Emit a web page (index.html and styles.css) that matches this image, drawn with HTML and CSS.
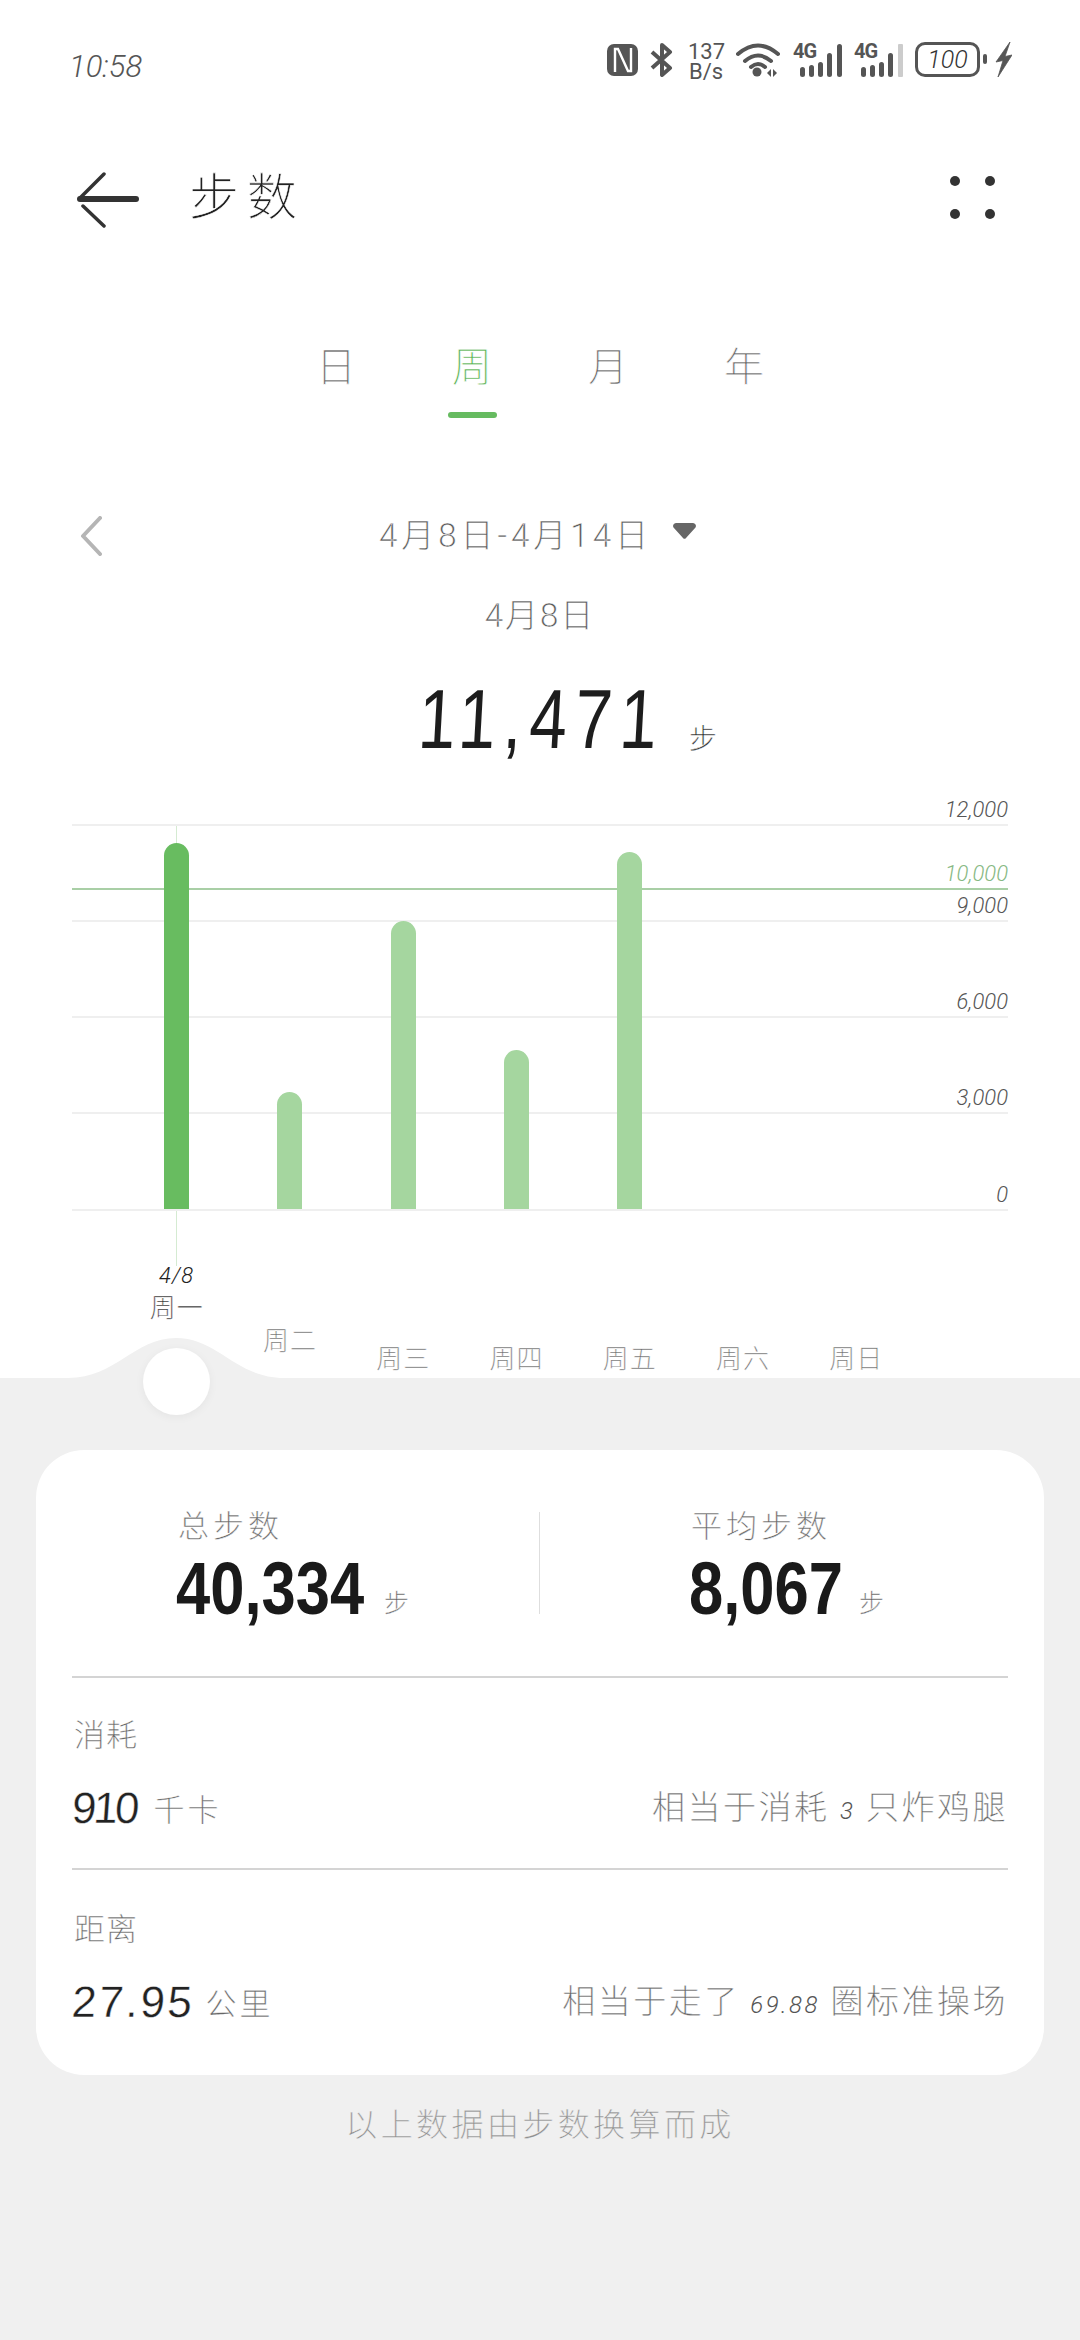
FILE: index.html
```html
<!DOCTYPE html>
<html lang="zh-CN">
<head>
<meta charset="utf-8">
<title>步数</title>
<link rel="stylesheet" href="styles.css">
</head>
<body>
<div class="screen">
  <header class="status">
    <span class="time">10:58</span>
    <div class="status-icons">
      <svg class="ic-nfc" width="31" height="32" viewBox="0 0 31 32"><rect width="31" height="32" rx="7" fill="#555"/><path d="M8 28V5h3l10 22h3V4" fill="none" stroke="#fff" stroke-width="2.400"/></svg>
      <svg class="ic-bt" width="23" height="34" viewBox="0 0 23 34"><path d="M2 9l18 16-8 7V2l8 7L2 25" fill="none" stroke="#555" stroke-width="4" stroke-linejoin="round"/></svg>
      <div class="speed">137<br>B/s</div>
      <svg class="ic-wifi" width="44" height="34" viewBox="0 0 44 34"><g fill="none" stroke="#555" stroke-width="4" stroke-linecap="round"><path d="M2 11Q22-6 42 11"/><path d="M9 18Q22 7 35 18"/><path d="M15 24Q22 18 29 24"/></g><circle cx="21" cy="29" r="4.500" fill="#555"/><path d="M31 30l4-4v8zM37 26l4 4-4 4z" fill="#555"/></svg>
      <div class="signal">
        <span class="net">4G</span>
        <svg width="42" height="33" viewBox="0 0 42 33"><g fill="#555"><rect x="0" y="23" width="5" height="10" rx="2.500"/><rect x="9" y="21" width="5" height="12" rx="2.500"/><rect x="18" y="18" width="5" height="15" rx="2.500"/><rect x="27" y="9" width="5" height="24" rx="2.500"/><rect x="37" y="0" width="5" height="33" rx="2.500"/></g></svg>
      </div>
      <div class="signal">
        <span class="net">4G</span>
        <svg width="42" height="33" viewBox="0 0 42 33"><g fill="#555"><rect x="0" y="23" width="5" height="10" rx="2.500"/><rect x="9" y="21" width="5" height="12" rx="2.500"/><rect x="18" y="18" width="5" height="15" rx="2.500"/><rect x="27" y="9" width="5" height="24" rx="2.500"/></g><rect x="37" y="0" width="5" height="33" rx="1" fill="#ccc"/></svg>
      </div>
      <div class="battery"><span>100</span></div>
      <span class="nub"></span>
      <svg class="ic-bolt" width="17" height="35" viewBox="0 0 17 35"><path d="M15 0L1 20l7-1.500L3 35l14-22-7 1.500z" fill="#555" stroke="#555" stroke-width=".8" stroke-linejoin="round"/></svg>
    </div>
  </header>

  <nav class="appbar">
    <svg class="back" width="64" height="56" viewBox="0 0 64 56"><path d="M28 2L4 26M7 34l21 20" fill="none" stroke="#333" stroke-width="3.500" stroke-linecap="round"/><path d="M4 27H60" stroke="#333" stroke-width="6" stroke-linecap="round"/></svg>
    <h1 class="title">步数</h1>
    <div class="more"><i></i><i></i><i></i><i></i></div>
  </nav>

  <div class="tabs">
    <div class="tab">日</div>
    <div class="tab active">周</div>
    <div class="tab">月</div>
    <div class="tab">年</div>
  </div>

  <div class="range">
    <svg class="prev" width="22" height="40" viewBox="0 0 22 40"><path d="M20 2L3 20l17 18" fill="none" stroke="#b5b5b5" stroke-width="4" stroke-linecap="round" stroke-linejoin="round"/></svg>
    <div class="range-label hand">4月8日-4月14日</div>
    <svg class="caret" width="23" height="16" viewBox="0 0 23 16"><path d="M3 0h17a3 3 0 0 1 2.500 4.500L13 15a2 2 0 0 1-3 0L.5 4.500A3 3 0 0 1 3 0z" fill="#666"/></svg>
  </div>

  <div class="picked hand">4月8日</div>

  <div class="total">
    <span class="total-num">11,471</span><span class="total-unit hand">步</span>
  </div>

  <section class="chart">
    <div class="plot">
      <div class="tick tk1"><span>12,000</span></div>
      <div class="tick goal tk2"><span>10,000</span></div>
      <div class="tick tk3"><span>9,000</span></div>
      <div class="tick tk4"><span>6,000</span></div>
      <div class="tick tk4"><span>3,000</span></div>
      <div class="tick tk5"><span>0</span></div>
      <div class="bars">
        <div class="bar selected" style="height:366px"></div>
        <div class="bar" style="height:117px"></div>
        <div class="bar" style="height:288px"></div>
        <div class="bar" style="height:159px"></div>
        <div class="bar" style="height:357px"></div>
      </div>
    </div>
    <div class="days">
      <div class="day selected"><span class="day-date">4/8</span><span>周一</span></div>
      <div class="day near"><span>周二</span></div>
      <div class="day"><span>周三</span></div>
      <div class="day"><span>周四</span></div>
      <div class="day"><span>周五</span></div>
      <div class="day"><span>周六</span></div>
      <div class="day"><span>周日</span></div>
    </div>
  </section>

  <section class="panel">
    <svg class="bump" width="216" height="42" viewBox="0 0 216 42"><path d="M0 41C48 41 66 1 108 1S168 41 216 41V42H0z" fill="#f0f0f0"/></svg>
    <div class="knob"></div>
    <div class="card">
      <div class="stats">
        <div class="stat first">
          <div class="stat-label hand">总步数</div>
          <div class="stat-value"><b class="wide">40,334</b><span class="hand">步</span></div>
        </div>
        <div class="stat second">
          <div class="stat-label hand">平均步数</div>
          <div class="stat-value"><b class="short">8,067</b><span class="hand">步</span></div>
        </div>
      </div>
      <div class="metric m1">
        <div class="metric-label hand">消耗</div>
        <div class="metric-row">
          <div class="metric-value"><b>910</b><span class="hand">千卡</span></div>
          <div class="metric-note hand">相当于消耗 <em>3</em> 只炸鸡腿</div>
        </div>
      </div>
      <div class="metric m2">
        <div class="metric-label hand">距离</div>
        <div class="metric-row">
          <div class="metric-value"><b>27.95</b><span class="hand">公里</span></div>
          <div class="metric-note hand">相当于走了 <em>69.88</em> 圈标准操场</div>
        </div>
      </div>
    </div>
    <p class="foot">以上数据由步数换算而成</p>
  </section>
</div>
</body>
</html>
```
FILE: styles.css
```css
* { box-sizing: border-box; }
html, body { margin: 0; padding: 0; background: #fff; }
.screen {
  width: 1080px; height: 2340px; display: flex; flex-direction: column;
  font-family: Roboto, "Noto Sans CJK SC", sans-serif; font-weight: 300;
  color: #666; overflow: hidden; background: #fff;
}
.hand {
  font-family: Roboto, "Noto Sans CJK SC", sans-serif;
  font-weight: 300;
  -webkit-text-stroke: .35px #fff;
  opacity: .999;
}

/* status bar */
.status { height: 100px; padding: 42px 68px 0 69px; display: flex; justify-content: space-between; align-items: flex-start; }
.time { font: italic 300 31px/36px Roboto, sans-serif; color: #555; margin-top: 7px; opacity: .999; }
.status-icons { display: flex; align-items: flex-start; }
.status-icons svg { display: block; flex: none; }
.ic-nfc { margin-top: 2px; }
.ic-bt { margin: 1px 0 0 12px; }
.speed { margin-left: 15px; width: 36px; text-align: center; font: 400 22px/20px Roboto, sans-serif; color: #555; }
.ic-wifi { margin: 1px 0 0 12px; }
.signal { position: relative; width: 49px; height: 34px; margin-left: 13px; display: flex; justify-content: flex-end; align-items: flex-end; margin-top: 1px; }
.signal + .signal { margin-left: 12px; }
.net { position: absolute; left: 0; top: -1px; font: 700 20px/18px Roboto, sans-serif; letter-spacing: -1px; color: #555; }
.battery { margin-left: 12px; width: 65px; height: 35px; border: 3px solid #555; border-radius: 10px; display: flex; align-items: center; justify-content: center; }
.battery span { font: italic 300 25px/28px Roboto, sans-serif; color: #333; }
.nub { width: 4px; height: 10px; background: #555; border-radius: 2px; margin: 12px 0 0 3px; }
.ic-bolt { margin-left: 8px; }

/* app bar */
.appbar { height: 96px; padding: 0 0 0 76px; margin-top: 48px; display: flex; align-items: center; }
.back { flex: none; margin-top: 8px; }
.title { margin: 3px 0 0 49px; font-size: 50px; line-height: 60px; font-weight: 300; color: #222; letter-spacing: 8px; -webkit-text-stroke: .6px #fff; opacity: .999; }
.more { margin: 3px 85px 0 auto; display: grid; grid-template-columns: 10px 10px; grid-template-rows: 10px 10px; gap: 23px 25px; }
.more i { background: #333; border-radius: 50%; }

/* tabs */
.tabs { margin-top: 94px; height: 100px; display: grid; grid-template-columns: repeat(4, 136px); justify-content: center; }
.tab { font-size: 40px; line-height: 60px; text-align: center; color: #666; -webkit-text-stroke: .6px #fff; }
.tab.active { color: #55b04e; }
.tab.active::after { content: ""; display: block; width: 49px; height: 6px; border-radius: 3px; background: #66bb60; margin: 14px auto 0; }

/* date range */
.range { margin-top: 76px; padding-left: 80px; display: flex; align-items: center; height: 44px; }
.prev { flex: none; }
.range-label { margin-left: 277px; font-size: 33px; line-height: 44px; color: #555; letter-spacing: 4px; white-space: nowrap; }
.caret { margin-left: 21px; margin-top: -10px; flex: none; }
.picked { margin-top: 36px; height: 44px; line-height: 44px; text-align: center; font-size: 33px; color: #555; letter-spacing: 2px; }

/* total */
.total { margin-top: 33px; height: 96px; display: flex; align-items: flex-end; padding-left: 416px; }
.total-num { display: block; width: 273px; flex: none; font: 400 84px/96px "Liberation Sans", sans-serif; color: #1d1d1d; letter-spacing: 9.500px; transform: scaleX(.8) skewX(-4deg); transform-origin: left bottom; white-space: nowrap; }
.total-unit { font-size: 28px; line-height: 34px; margin: 0 0 10px 0; color: #222; }

/* chart */
.chart { margin-top: 24px; }
.plot { position: relative; margin: 0 72px; isolation: isolate; }
.tick { border-bottom: 2px solid #efefef; display: flex; justify-content: flex-end; align-items: flex-end; padding: 0 0 2px 0; }
.tick span { font: italic 300 22px/24px Roboto, sans-serif; color: #555; opacity: .999; }
.tick.goal { border-bottom-color: #a9cfa6; }
.tick.goal span { color: #86b883; }
.tk1 { height: 35px; }
.tk2 { height: 64px; }
.tk3 { height: 32px; }
.tk4 { height: 96px; }
.tk5 { height: 97px; }
.bars { position: absolute; left: 48px; top: 0; bottom: 2px; width: 793px; display: grid; grid-template-columns: repeat(7, 1fr); justify-items: center; align-items: end; }
.bar { width: 25px; background: #a5d69f; border-radius: 12.500px 12.500px 0 0; position: relative; }
.bar.selected { background: #68bc60; }
.bar.selected::after { content: ""; position: absolute; left: 12px; width: 1px; top: -18px; bottom: -57px; background: #d5ebd2; z-index: -1; }

.days { margin: 0 72px; padding: 0 95px 0 48px; height: 167px; display: grid; grid-template-columns: repeat(7, 1fr); justify-items: center; align-items: end; }
.day { font-size: 26px; line-height: 30px; letter-spacing: 1px; color: #666; margin-bottom: 4px; display: flex; flex-direction: column; align-items: center; white-space: nowrap; -webkit-text-stroke: .4px #fff; opacity: .999; }
.day.near { margin-bottom: 22px; }
.day.selected { margin-bottom: 55px; color: #222; }
.day-date { font: italic 300 22px/24px Roboto, sans-serif; color: #222; margin-bottom: 5px; -webkit-text-stroke: 0; }

/* bottom panel */
.panel { flex: 1; background: #f0f0f0; position: relative; padding: 72px 36px 0; display: flex; flex-direction: column; }
.bump { position: absolute; left: 68px; top: -41px; display: block; }
.knob { position: absolute; left: 143px; top: -30px; width: 67px; height: 67px; border-radius: 50%; background: #fff; box-shadow: 0 2px 10px rgba(0,0,0,.05); }
.card { height: 625px; background: #fff; border-radius: 48px; padding: 0 36px; display: flex; flex-direction: column; }
.stats { height: 228px; border-bottom: 2px solid #d4d4d4; display: grid; grid-template-columns: 1fr 1fr; position: relative; }
.stats::after { content: ""; position: absolute; left: 467px; top: 62px; height: 102px; width: 1px; background: #dedede; }
.stat { padding-top: 57px; }
.stat.first { padding-left: 104px; }
.stat.second { padding-left: 149px; }
.stat-label { font-size: 31px; line-height: 40px; color: #666; letter-spacing: 4px; padding-left: 2px; }
.stat-value { display: flex; align-items: flex-end; margin-top: 1px; }
.stat-value b { display: block; flex: none; font: 700 75px/80px "Liberation Sans", sans-serif; color: #1a1a1a; transform: scaleX(.82); transform-origin: left center; white-space: nowrap; }
.stat-value b.wide { width: 187px; }
.stat-value b.short { width: 149px; }
.stat-value span { font-size: 25px; line-height: 32px; margin: 0 0 8px 21px; color: #555; }
.metric { border-bottom: 2px solid #d4d4d4; }
.metric.m1 { height: 193px; padding-top: 38px; }
.metric.m2 { height: 205px; padding-top: 40px; border-bottom: 0; }
.metric-label { font-size: 31px; line-height: 40px; color: #666; padding-left: 2px; letter-spacing: 1px; }
.metric-row { display: flex; justify-content: space-between; align-items: flex-end; margin-top: 30px; }
.metric-value { display: flex; align-items: flex-end; }
.metric-value b { font: 400 44px/44px "Liberation Sans", sans-serif; color: #222; -webkit-text-stroke: .4px #fff; opacity: .999; transform: skewX(-4deg); }
.m1 .metric-value b { letter-spacing: -3px; }
.m2 .metric-value b { letter-spacing: 2.500px; }
.metric-value span { font-size: 31px; line-height: 38px; color: #666; margin-left: 17px; letter-spacing: 3px; }
.m2 .metric-value span { margin-left: 11px; }
.metric-note { font-size: 33px; line-height: 38px; color: #666; letter-spacing: 2.500px; white-space: nowrap; }
.metric-note em { font: italic 300 24px/38px Roboto, sans-serif; color: #555; -webkit-text-stroke: 0; }
.foot { margin: 30px 0 0; text-align: center; font-size: 32px; line-height: 40px; color: #8f8f8f; letter-spacing: 3.400px; -webkit-text-stroke: .4px #f0f0f0; opacity: .999; }
```
